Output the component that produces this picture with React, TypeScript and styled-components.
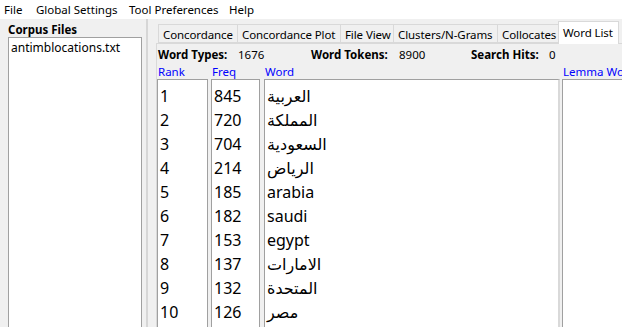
import React from "react";
import styled, { createGlobalStyle } from "styled-components";

const GlobalStyle = createGlobalStyle`
  body {
    margin: 0;
    background: #f0f0f0;
    overflow: hidden;
    font-family: "Noto Sans", "DejaVu Sans", sans-serif;
  }
`;

const menus: [string, number][] = [
  ["File", 32],
  ["Global Settings", 93],
  ["Tool Preferences", 100],
  ["Help", 40],
];
const tabs: [string, number][] = [
  ["Concordance", 80],
  ["Concordance Plot", 104],
  ["File View", 54],
  ["Clusters/N-Grams", 105],
  ["Collocates", 62],
  ["Word List", 61],
];
const words: [number, number, string][] = [
  [1, 845, "العربية"],
  [2, 720, "المملكة"],
  [3, 704, "السعودية"],
  [4, 214, "الرياض"],
  [5, 185, "arabia"],
  [6, 182, "saudi"],
  [7, 153, "egypt"],
  [8, 137, "الامارات"],
  [9, 132, "المتحدة"],
  [10, 126, "مصر"],
];

const App = () => {
  return (
    <Window>
      <GlobalStyle />
      <MenuBar>
        {menus.map(([m, w]) => (
          <MenuItem key={m} $w={w}>
            {m}
          </MenuItem>
        ))}
      </MenuBar>
      <Main>
        <LeftPanel>
          <PanelTitle>Corpus Files</PanelTitle>
          <FileList>
            <FileItem>antimblocations.txt</FileItem>
          </FileList>
        </LeftPanel>
        <Splitter />
        <RightPanel>
          <TabRow>
            {tabs.map(([t, w]) => (
              <Tab key={t} $w={w} $active={t === "Word List"}>
                {t}
              </Tab>
            ))}
          </TabRow>
          <Pane>
            <Stats>
              <StatLabel $w={80}>Word Types:</StatLabel>
              <StatValue $w={73}>1676</StatValue>
              <StatLabel $w={88}>Word Tokens:</StatLabel>
              <StatValue $w={72}>8900</StatValue>
              <StatLabel $w={78}>Search Hits:</StatLabel>
              <StatValue $w={20}>0</StatValue>
            </Stats>
            <Columns>
              <Column>
                <ColHead>Rank</ColHead>
                <ListBox $w={51}>
                  {words.map((w) => (
                    <Row key={w[0]}>{w[0]}</Row>
                  ))}
                </ListBox>
              </Column>
              <Column>
                <ColHead>Freq</ColHead>
                <ListBox $w={49}>
                  {words.map((w) => (
                    <Row key={w[0]}>{w[1]}</Row>
                  ))}
                </ListBox>
              </Column>
              <Column>
                <ColHead>Word</ColHead>
                <ListBox $w={296} $soft>
                  {words.map((w) => (
                    <Row key={w[0]}>{w[2]}</Row>
                  ))}
                </ListBox>
              </Column>
              <Column>
                <ColHead>Lemma Wo</ColHead>
                <ListBox $w={120} />
              </Column>
            </Columns>
          </Pane>
        </RightPanel>
      </Main>
    </Window>
  );
};

const Window = styled.div`
  width: 622px;
  height: 327px;
  display: flex;
  flex-direction: column;
  overflow: hidden;
  color: #000;
`;

const MenuBar = styled.div`
  height: 19px;
  background: #fff;
  display: flex;
  align-items: center;
  padding-left: 4px;
  font-size: 11.5px;
`;

const MenuItem = styled.span<{ $w: number }>`
  width: ${(p) => p.$w}px;
  white-space: nowrap;
`;

const Main = styled.div`
  flex: 1;
  display: flex;
  min-height: 0;
`;

const LeftPanel = styled.div`
  width: 138px;
  padding: 3px 0 0 8px;
  display: flex;
  flex-direction: column;
`;

const PanelTitle = styled.div`
  font-size: 11.5px;
  font-weight: bold;
  line-height: 15px;
  height: 15px;
`;

const FileList = styled.div`
  flex: 1;
  background: #fff;
  border: 1px solid #a0a0a0;
  border-bottom: none;
  width: 132px;
`;

const FileItem = styled.div`
  font-size: 12px;
  line-height: 18px;
  padding: 1px 0 0 2px;
  white-space: nowrap;
`;

const Splitter = styled.div`
  width: 2px;
  background: #d6d6d6;
`;

const RightPanel = styled.div`
  flex: 1;
  display: flex;
  flex-direction: column;
  padding-left: 8px;
  min-width: 0;
`;

const TabRow = styled.div`
  display: flex;
  align-items: flex-end;
  height: 25px;
  padding-left: 3px;
  margin-bottom: -1px;
  position: relative;
  z-index: 1;
`;

const Tab = styled.div<{ $w: number; $active?: boolean }>`
  width: ${(p) => p.$w}px;
  flex: none;
  font-size: 11.5px;
  letter-spacing: -0.1px;
  white-space: nowrap;
  overflow: hidden;
  padding: 0 0 0 4px;
  height: ${(p) => (p.$active ? "23px" : "19px")};
  line-height: ${(p) => (p.$active ? "21px" : "19px")};
  margin-bottom: ${(p) => (p.$active ? "0" : "1px")};
  background: ${(p) => (p.$active ? "#fff" : "#f0f0f0")};
  border: 1px solid #d9d9d9;
  border-bottom: ${(p) => (p.$active ? "none" : "1px solid #d9d9d9")};
  margin-left: -1px;
  box-sizing: border-box;
`;

const Pane = styled.div`
  flex: 1;
  border-top: 1px solid #d9d9d9;
  border-left: 1px solid #d9d9d9;
  display: flex;
  flex-direction: column;
  min-height: 0;
`;

const Stats = styled.div`
  display: flex;
  height: 20px;
  align-items: center;
  padding: 0 0 0 1px;
  font-size: 11.5px;
`;

const StatLabel = styled.span<{ $w: number }>`
  width: ${(p) => p.$w}px;
  font-weight: bold;
  white-space: nowrap;
`;

const StatValue = styled.span<{ $w: number }>`
  width: ${(p) => p.$w}px;
  white-space: nowrap;
`;

const Columns = styled.div`
  flex: 1;
  display: grid;
  grid-template-columns: 54px 53px 298px 1fr;
  min-height: 0;
`;

const Column = styled.div`
  display: flex;
  flex-direction: column;
  min-width: 0;
  overflow: hidden;
`;

const ColHead = styled.div`
  font-size: 11.5px;
  color: #0000ff;
  height: 15px;
  line-height: 15px;
  padding-left: 1px;
  white-space: nowrap;
`;

const ListBox = styled.div<{ $w: number; $soft?: boolean }>`
  flex: 1;
  width: ${(p) => p.$w}px;
  box-sizing: border-box;
  background: #fff;
  border: 1px solid #a0a0a0;
  border-bottom: none;
  border-right: ${(p) => (p.$soft ? "2px solid #d9d9d9" : "1px solid #a0a0a0")};
  padding-top: 4px;
`;

const Row = styled.div`
  font-size: 16px;
  line-height: 24px;
  padding-left: 2px;
  white-space: nowrap;
`;

export default App;
